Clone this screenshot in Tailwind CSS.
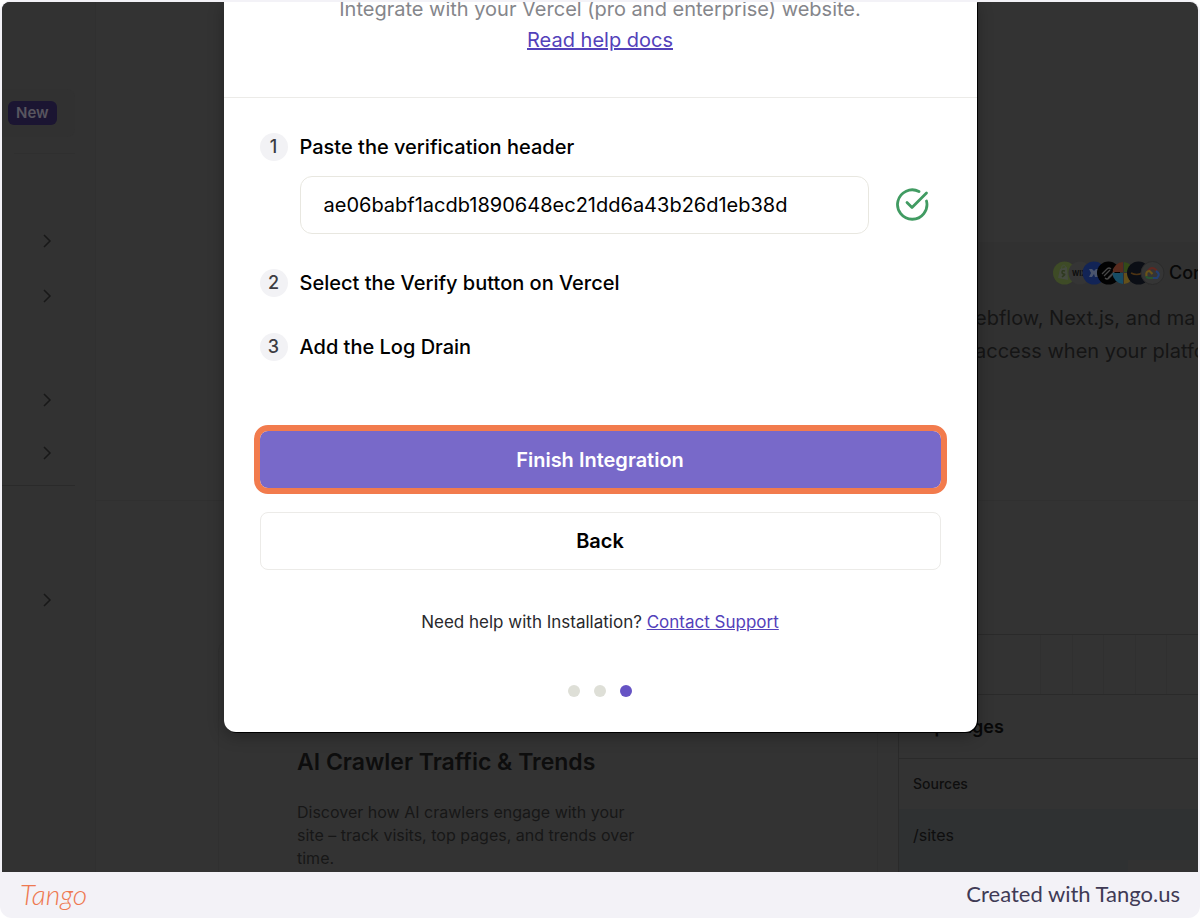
<!DOCTYPE html>
<html lang="en">
<head>
    <meta charset="UTF-8">
    <meta name="viewport" content="width=device-width, initial-scale=1.0">
    <title>Finish Integration</title>
    <script src="https://cdn.jsdelivr.net/npm/@tailwindcss/browser@4"></script>
</head>
<body class="bg-white font-['Inter',sans-serif]">
    <div class="min-h-screen flex flex-col bg-[#f3f2f7] rounded-xl overflow-hidden">
        <div class="relative flex-1 flex mt-0.5 mx-0.5 bg-[#333333] rounded-t-lg overflow-hidden">

            <!-- Sidebar -->
            <aside class="w-[94px] shrink-0 bg-[#323232] border-r border-[#303030]">
                <div class="mt-[87px] mr-5 h-12 pl-1.5 flex items-center bg-[#313131] rounded-r-lg">
                    <span class="h-6 px-2 flex items-center rounded-md bg-[#1b1532] text-[#58555f] text-[15px] font-semibold">New</span>
                </div>
                <div class="mt-4 ml-3 mr-5 border-t border-[#2f2f2f]"></div>
                <div class="pt-[79px] pl-10 flex flex-col text-[#181818]">
                    <svg class="w-2.5 h-4" viewBox="0 0 10 16" fill="none" stroke="currentColor" stroke-width="1.5"><path d="M2 2l6 6-6 6"/></svg>
                    <svg class="w-2.5 h-4 mt-[39px]" viewBox="0 0 10 16" fill="none" stroke="currentColor" stroke-width="1.5"><path d="M2 2l6 6-6 6"/></svg>
                    <svg class="w-2.5 h-4 mt-[88px]" viewBox="0 0 10 16" fill="none" stroke="currentColor" stroke-width="1.5"><path d="M2 2l6 6-6 6"/></svg>
                    <svg class="w-2.5 h-4 mt-[37px]" viewBox="0 0 10 16" fill="none" stroke="currentColor" stroke-width="1.5"><path d="M2 2l6 6-6 6"/></svg>
                </div>
                <div class="mt-6 mr-5 border-t border-[#2a2a2a]"></div>
                <div class="pt-[106px] pl-10 text-[#181818]">
                    <svg class="w-2.5 h-4" viewBox="0 0 10 16" fill="none" stroke="currentColor" stroke-width="1.5"><path d="M2 2l6 6-6 6"/></svg>
                </div>
            </aside>

            <!-- Page behind the dialog -->
            <main class="flex-1 min-w-0 flex flex-col">
                <section class="mt-60 ml-40 h-[178px] flex justify-end bg-[#313131]">
                    <div class="w-[223px] pt-[18px] overflow-hidden whitespace-nowrap">
                        <div class="pl-[78px] flex items-center text-lg leading-[26px] font-medium text-[#080808]">
                            <svg class="w-28 h-6 mr-1 shrink-0" viewBox="0 0 112 24">
                                <circle cx="11.5" cy="12" r="11.5" fill="#3e4b26"/>
                                <path d="M7 8l7-2 1 13-10-2z" fill="#454b40"/>
                                <path d="M8.500 8c0-5 4-5 4.500-1" fill="none" stroke="#454b40"/>
                                <path d="M12 10q-3-1-3 1t2 2-2 3" fill="none" stroke="#2f3a20" stroke-width="1.5"/>
                                <circle cx="27" cy="12" r="11.5" fill="#353535"/>
                                <text x="19" y="15" font-size="7" font-weight="700" fill="#0c0c0c">WIX</text>
                                <circle cx="41" cy="12" r="11.5" fill="#122456"/>
                                <path d="M36 8h3l2 2 2-2h3v8h-4l-1-3-2 3h-3l2-4z" fill="#4a546c"/>
                                <circle cx="55.5" cy="12" r="11.5" fill="#020202"/>
                                <path d="M49 13l5-5q2-2 4 0M51 15l6-6M55 17l6-6q1-2-1-3M52 17q2 2 4 0l5-5" fill="none" stroke="#474747" stroke-width="1.3"/>
                                <path d="M70 1v10H59.500A11 11 0 0 1 70 1z" fill="#592b1e"/>
                                <path d="M71 1a11 11 0 0 1 10 10H71z" fill="#344a18"/>
                                <path d="M70 12v11A11 11 0 0 1 59.500 12z" fill="#174c64"/>
                                <path d="M71 12h10a11 11 0 0 1-10 11z" fill="#64501a"/>
                                <circle cx="85.5" cy="12" r="11.5" fill="#0b0e15"/>
                                <path d="M78 12q6 3 11 0" fill="none" stroke="#4c3314" stroke-width="1.5"/>
                                <circle cx="99.5" cy="12" r="11.5" fill="#353535" stroke="#2b2b2b"/>
                                <path d="M95 10q4-6 9 0" fill="none" stroke="#602821" stroke-width="2.2"/>
                                <path d="M103 10q5 3 1 7h-4" fill="none" stroke="#233f73" stroke-width="2.2"/>
                                <path d="M100 17h-4q-2 0-3-2" fill="none" stroke="#29552f" stroke-width="2.2"/>
                                <path d="M93.500 15q-1-5 3-5l3 3" fill="none" stroke="#6b5418" stroke-width="2.2"/>
                            </svg>
                            <span>Con</span>
                        </div>
                        <p class="mt-4 text-xl leading-[33px] text-[#151515]">ebflow, Next.js, and ma<br>access when your platfo</p>
                    </div>
                </section>
                <div class="mt-20 border-t border-[#303030]"></div>

                <div class="flex-1 flex pt-[133px]">
                    <section class="w-[660px] ml-[122px] mt-1.5 pl-[78px] pt-[106px] border-l border-r border-[#303030] rounded-t-xl">
                        <h2 class="text-[23px] leading-8 font-semibold text-[#0d0d0d]">AI Crawler Traffic &amp; Trends</h2>
                        <p class="w-[350px] mt-[23px] text-base leading-[23px] text-[#171717]">Discover how AI crawlers engage with your site – track visits, top pages, and trends over time.</p>
                    </section>
                    <section class="flex-1 ml-5 flex flex-col border-l border-t border-[#2a2a2a] overflow-hidden whitespace-nowrap">
                        <div class="h-[60px] pl-[141px] flex border-b border-[#2a2a2a]">
                            <div class="w-8 border-l border-[#303030]"></div>
                            <div class="w-8 border-l border-[#303030]"></div>
                            <div class="w-8 border-l border-[#303030]"></div>
                            <div class="w-8 border-l border-[#303030]"></div>
                            <div class="w-8 border-l border-[#303030]"></div>
                        </div>
                        <h3 class="h-16 pl-3.5 flex items-center border-b border-[#2a2a2a] text-lg font-semibold text-[#080808]">Top Pages</h3>
                        <div class="h-[50px] pl-3.5 flex items-center text-sm font-medium text-[#0e0e0e]">Sources</div>
                        <div class="flex-1 pt-3.5 flex flex-col bg-[#2f3132] text-base leading-6 text-[#0e0e0e]">
                            <span class="pl-3.5">/sites</span>
                            <div class="mt-auto ml-auto w-[70px] h-3 bg-[#323232]"></div>
                        </div>
                    </section>
                </div>
            </main>

            <!-- Dialog -->
            <div class="absolute inset-0 flex justify-center items-start">
                <div role="dialog" class="w-[753px] bg-white rounded-b-xl shadow-[1px_1px_0_#000000,0_4px_16px_rgba(0,0,0,0.3)] text-black">
                    <header class="h-24 px-8 flex flex-col items-center border-b border-[#ecebe8] text-center text-xl leading-[31px] text-[#85868b]">
                        <p class="-mt-2">Integrate with your Vercel (pro and enterprise) website.</p>
                        <a href="#" class="text-[#5341ba] underline">Read help docs</a>
                    </header>

                    <div class="px-9 pt-[35px] text-xl leading-7 font-medium">
                        <div class="flex items-center gap-3">
                            <span class="size-7 rounded-full bg-[#f2f2f5] flex items-center justify-center text-lg text-[#3c3c42]">1</span>
                            <label for="header">Paste the verification header</label>
                        </div>
                        <div class="mt-[15px] pl-10 pr-3 flex items-center">
                            <input id="header" type="text" value="ae06babf1acdb1890648ec21dd6a43b26d1eb38d" class="flex-1 h-[58px] px-[23px] border border-[#e8e7e0] rounded-xl font-normal outline-none">
                            <svg class="w-9 h-9 ml-6" viewBox="0 0 36 36" fill="none" stroke="#419b62" stroke-width="2.8" stroke-linecap="round" stroke-linejoin="round">
                                <path d="M26 4.500A14.700 14.700 0 1 0 33.500 14"/>
                                <path d="M14 15.500l5 5L33.500 6"/>
                            </svg>
                        </div>
                        <div class="mt-[35px] flex items-center gap-3">
                            <span class="size-7 rounded-full bg-[#f2f2f5] flex items-center justify-center text-lg text-[#3c3c42]">2</span>
                            <span>Select the Verify button on Vercel</span>
                        </div>
                        <div class="mt-9 flex items-center gap-3">
                            <span class="size-7 rounded-full bg-[#f2f2f5] flex items-center justify-center text-lg text-[#3c3c42]">3</span>
                            <span>Add the Log Drain</span>
                        </div>

                        <button class="mt-[70px] w-full h-[57px] block rounded-lg bg-[#7869c9] text-white font-semibold outline-6 outline-[#f27b4d]">Finish Integration</button>
                        <button class="mt-6 w-full h-[58px] block rounded-lg border border-[#ecebe8] font-semibold">Back</button>
                    </div>

                    <p class="mt-10 text-center text-[17px] leading-6 text-[#28282c]">Need help with Installation? <a href="#" class="text-[#5341ba] underline">Contact Support</a></p>
                    <div class="mt-[51px] pb-[35px] flex justify-center gap-3.5">
                        <span class="size-3 rounded-full bg-[#dedfd7]"></span>
                        <span class="size-3 rounded-full bg-[#dedfd7]"></span>
                        <span class="size-3 rounded-full bg-[#6653c4]"></span>
                    </div>
                </div>
            </div>
        </div>

        <footer class="h-[46px] px-5 pb-0.5 flex items-center justify-between font-['Lato',sans-serif]">
            <span class="text-[28px] leading-8 italic font-light text-[#ee7951]">Tango</span>
            <span class="text-[22px] leading-8 text-[#403a55]">Created with Tango.us</span>
        </footer>
    </div>
</body>
</html>
